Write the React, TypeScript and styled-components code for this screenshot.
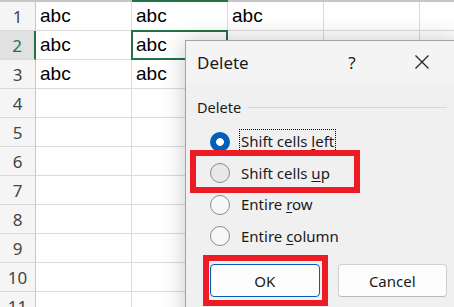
import React from 'react';
import styled, { createGlobalStyle, css } from 'styled-components';

const GlobalStyle = createGlobalStyle`
  html, body {
    margin: 0;
    padding: 0;
    background: #ffffff;
    overflow: hidden;
  }
  body {
    width: 454px;
    height: 307px;
  }
`;

const Page = styled.div`
  position: relative;
  width: 454px;
  height: 307px;
  overflow: hidden;
  background: #ffffff;
`;

const Sheet = styled.div`
  display: grid;
  grid-template-columns: 36px repeat(5, 96px);
  grid-template-rows: 2px repeat(11, 29px);
  font-family: 'Liberation Sans', Arial, sans-serif;
`;

const ColHead = styled.div<{ $active?: boolean }>`
  background: ${(p) => (p.$active ? '#217346' : '#c6c6c6')};
`;

const Corner = styled.div`
  background: #c6c6c6;
`;

const RowHead = styled.div<{ $active?: boolean }>`
  display: flex;
  align-items: center;
  justify-content: center;
  font-family: 'Noto Sans', 'Open Sans', sans-serif;
  font-size: 17px;
  color: ${(p) => (p.$active ? '#217346' : '#444444')};
  background: ${(p) => (p.$active ? '#e1e1e1' : '#f5f5f5')};
  border-bottom: 1px solid #dadada;
  box-sizing: border-box;
  ${(p) =>
    p.$active
      ? css`border-right: 2px solid #217346;`
      : css`border-right: 1px solid #c8c8c8;`}
`;

const Cell = styled.div<{ $active?: boolean }>`
  display: flex;
  align-items: center;
  padding-left: 4px;
  font-size: 19px;
  color: #000000;
  border-right: 1px solid #dadada;
  border-bottom: 1px solid #dadada;
  box-sizing: border-box;
  ${(p) =>
    p.$active &&
    css`
      border: 2px solid #217346;
      margin: -1px 0 0 -1px;
      padding-left: 3px;
    `}
`;

const Dialog = styled.div`
  position: absolute;
  left: 185px;
  top: 40px;
  width: 275px;
  height: 290px;
  background: #f0f0f0;
  border: 1px solid #a3a3a3;
  box-sizing: border-box;
  box-shadow: 0 0 22px rgba(0, 0, 0, 0.22);
  font-family: 'Noto Sans', 'Open Sans', sans-serif;
  color: #1a1a1a;
`;

const TitleBar = styled.div`
  display: flex;
  align-items: center;
  height: 42px;
  padding: 0 14px 0 11px;
  gap: 24px;
  background: #f4f4f4;
`;

const Title = styled.div`
  flex: 1;
  font-size: 17px;
`;

const TitleButton = styled.div`
  width: 46px;
  display: flex;
  justify-content: center;
  align-items: center;
  font-size: 17px;
  color: #222;
`;

const Body = styled.div`
  padding: 0 12px 0 11px;
`;

const GroupLabel = styled.div`
  display: flex;
  align-items: center;
  margin-top: 14px;
  height: 20px;
  font-size: 14.5px;

  &::after {
    content: '';
    flex: 1;
    height: 1px;
    margin-left: 7px;
    background: #d7d7d7;
  }
`;

const Options = styled.div`
  margin-top: 9px;
  display: flex;
  flex-direction: column;
`;

const Option = styled.div`
  display: flex;
  align-items: center;
  height: 31.5px;
  padding-left: 13px;
  gap: 9px;
  font-size: 15px;
`;

const Radio = styled.span<{ $checked?: boolean; $hover?: boolean }>`
  width: 20px;
  height: 20px;
  border-radius: 50%;
  box-sizing: border-box;
  flex-shrink: 0;
  ${(p) =>
    p.$checked
      ? css`
          background: radial-gradient(circle, #ffffff 0 3.6px, #005fb8 4.2px);
        `
      : css`
          border: 1px solid #8a8a8a;
          background: ${p.$hover ? '#e8e8e8' : '#f7f7f7'};
        `}
`;

const Label = styled.span<{ $focus?: boolean }>`
  padding: 1px 1px 2px 1px;
  border: 1px dotted ${(p) => (p.$focus ? '#000000' : 'transparent')};
  line-height: 20px;

  u {
    text-underline-offset: 2px;
  }
`;

const Buttons = styled.div`
  display: flex;
  gap: 18px;
  margin-top: 12px;
  padding-left: 13px;
`;

const Button = styled.div<{ $primary?: boolean }>`
  width: 110px;
  height: 33px;
  box-sizing: border-box;
  display: flex;
  align-items: center;
  justify-content: center;
  font-size: 15px;
  border-radius: 4px;
  background: #fdfdfd;
  border: 1px solid ${(p) => (p.$primary ? '#005fb8' : '#d0d0d0')};
  border-bottom-color: ${(p) => (p.$primary ? '#005fb8' : '#b8b8b8')};
`;

const Callout = styled.div`
  position: absolute;
  border: 6px solid #ed1c24;
  box-sizing: border-box;
  pointer-events: none;
`;

const rows = Array.from({ length: 11 }, (_, i) => i + 1);
const data: Record<number, string[]> = {
  1: ['abc', 'abc', 'abc', '', ''],
  2: ['abc', 'abc', '', '', ''],
  3: ['abc', 'abc', '', '', ''],
};

const CloseIcon = () => (
  <svg width="16" height="16" viewBox="0 0 16 16">
    <path d="M1.5 1.5 L14.5 14.5 M14.5 1.5 L1.5 14.5" stroke="#222" strokeWidth="1.2" fill="none" />
  </svg>
);

export default function App() {
  return (
    <Page>
      <GlobalStyle />
      <Sheet>
        <Corner />
        {[0, 1, 2, 3, 4].map((c) => (
          <ColHead key={c} $active={c === 1} />
        ))}
        {rows.map((r) => (
          <React.Fragment key={r}>
            <RowHead $active={r === 2}>{r}</RowHead>
            {[0, 1, 2, 3, 4].map((c) => (
              <Cell key={c} $active={r === 2 && c === 1}>
                {data[r]?.[c] ?? ''}
              </Cell>
            ))}
          </React.Fragment>
        ))}
      </Sheet>

      <Dialog>
        <TitleBar>
          <Title>Delete</Title>
          <TitleButton>?</TitleButton>
          <TitleButton>
            <CloseIcon />
          </TitleButton>
        </TitleBar>
        <Body>
          <GroupLabel>Delete</GroupLabel>
          <Options>
            <Option>
              <Radio $checked />
              <Label $focus>
                Shift cells <u>l</u>eft
              </Label>
            </Option>
            <Option>
              <Radio $hover />
              <Label>
                Shift cells <u>u</u>p
              </Label>
            </Option>
            <Option>
              <Radio />
              <Label>
                Entire <u>r</u>ow
              </Label>
            </Option>
            <Option>
              <Radio />
              <Label>
                Entire <u>c</u>olumn
              </Label>
            </Option>
          </Options>
          <Buttons>
            <Button $primary>OK</Button>
            <Button>Cancel</Button>
          </Buttons>
        </Body>
      </Dialog>

      <Callout style={{ left: 190, top: 150, width: 170, height: 43 }} />
      <Callout style={{ left: 203, top: 255, width: 125, height: 51 }} />
    </Page>
  );
}
